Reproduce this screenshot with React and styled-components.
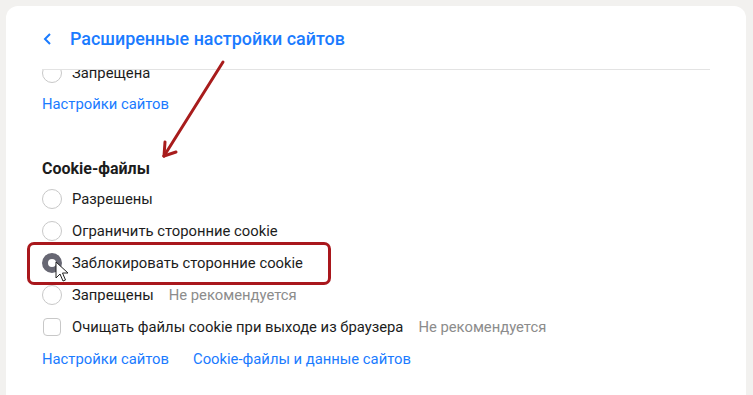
import React from "react";
import styled, { createGlobalStyle } from "styled-components";

const Global = createGlobalStyle`
  html, body { margin: 0; padding: 0; background: #f2f1ef; }
  body { font-family: "Roboto", "Liberation Sans", sans-serif; overflow: hidden; }
  #root { height: 395px; }
`;

const Page = styled.div`
  position: relative;
  height: 395px;
  padding: 6px 7px 0 6px;
  box-sizing: border-box;
  overflow: hidden;
`;

const Card = styled.div`
  background: #fff;
  border-radius: 12px 12px 0 0;
  height: 400px;
  padding: 0 36px;
  box-sizing: border-box;
`;

const Header = styled.div`
  display: flex;
  align-items: center;
  gap: 18px;
  height: 64px;
  padding-top: 2px;
  border-bottom: 1px solid #e3e3e3;
  box-sizing: border-box;
`;

const BackBtn = styled.span`
  display: flex;
  width: 9px;
  margin-left: 1px;
  color: #1a7bff;
`;

const Title = styled.h1`
  margin: 0;
  font-size: 17.9px;
  font-weight: 500;
  color: #1a7bff;
`;

const Scroll = styled.div`
  overflow: hidden;
  height: 330px;
`;

const Content = styled.div`
  margin-top: -13px;
  display: flex;
  flex-direction: column;
`;

const Row = styled.div`
  display: flex;
  align-items: center;
  height: 32px;
  gap: 10px;
  font-size: 14.8px;
  color: #1c1c1c;
`;

const Radio = styled.span`
  width: 20px;
  height: 20px;
  box-sizing: border-box;
  border-radius: 50%;
  border: ${(p) => (p.$checked ? "6px solid #676773" : "1px solid #c8c8c8")};
  background: #fff;
  flex: none;
`;

const Checkbox = styled.span`
  width: 18px;
  height: 18px;
  margin-left: 1px;
  margin-right: 1px;
  box-sizing: border-box;
  border-radius: 4px;
  border: 1px solid #c8c8c8;
  flex: none;
`;

const Hint = styled.span`
  color: #8c8c8c;
  margin-left: 5px;
`;

const Links = styled.div`
  display: flex;
  align-items: center;
  gap: 24px;
  height: ${(p) => p.$h || 32}px;
`;

const Link = styled.a`
  color: #1a7bff;
  font-size: 14.8px;
  text-decoration: none;
`;

const SectionTitle = styled.div`
  font-size: 16px;
  font-weight: 700;
  color: #1c1c1c;
  margin-top: 34px;
  height: 30px;
  display: flex;
  align-items: center;
`;

const Overlay = styled.svg`
  position: absolute;
  left: 0;
  top: 0;
  pointer-events: none;
`;

const Highlight = styled.div`
  position: absolute;
  left: 27px;
  top: 242px;
  width: 304px;
  height: 43px;
  box-sizing: border-box;
  border: 3px solid #a9171c;
  border-radius: 7px;
  pointer-events: none;
`;

const Cursor = styled.svg`
  position: absolute;
  left: 55px;
  top: 261px;
  pointer-events: none;
`;

export default function App() {
  return (
    <>
      <Global />
      <Page>
        <Card>
          <Header>
            <BackBtn>
              <svg width="9" height="12" viewBox="0 0 9 12">
                <path d="M7 1 L2 6 L7 11" fill="none" stroke="currentColor" strokeWidth="2" />
              </svg>
            </BackBtn>
            <Title>Расширенные настройки сайтов</Title>
          </Header>
          <Scroll>
            <Content>
              <Row>
                <Radio />
                <span>Запрещена</span>
              </Row>
              <Links $h={30}>
                <Link>Настройки сайтов</Link>
              </Links>
              <SectionTitle>Cookie-файлы</SectionTitle>
              <Row>
                <Radio />
                <span>Разрешены</span>
              </Row>
              <Row>
                <Radio />
                <span>Ограничить сторонние cookie</span>
              </Row>
              <Row>
                <Radio $checked />
                <span>Заблокировать сторонние cookie</span>
              </Row>
              <Row>
                <Radio />
                <span>Запрещены</span>
                <Hint>Не рекомендуется</Hint>
              </Row>
              <Row>
                <Checkbox />
                <span>Очищать файлы cookie при выходе из браузера</span>
                <Hint>Не рекомендуется</Hint>
              </Row>
              <Links>
                <Link>Настройки сайтов</Link>
                <Link>Cookie-файлы и данные сайтов</Link>
              </Links>
            </Content>
          </Scroll>
        </Card>
        <Highlight />
        <Cursor width="14" height="22" viewBox="0 0 14 22">
          <path d="M1 1 L1 17 L5 13 L8 20 L10.5 19 L7.5 12 L13 12 Z" fill="#fff" stroke="#222" strokeWidth="1" strokeLinejoin="round" />
        </Cursor>
        <Overlay width="753" height="395">
          <g stroke="#a81c1c" strokeWidth="3" strokeLinecap="round" fill="none">
            <path d="M223 62 L164 156" />
            <path d="M164 156 L165 142" />
            <path d="M164 156 L176 152" />
          </g>
        </Overlay>
      </Page>
    </>
  );
}
